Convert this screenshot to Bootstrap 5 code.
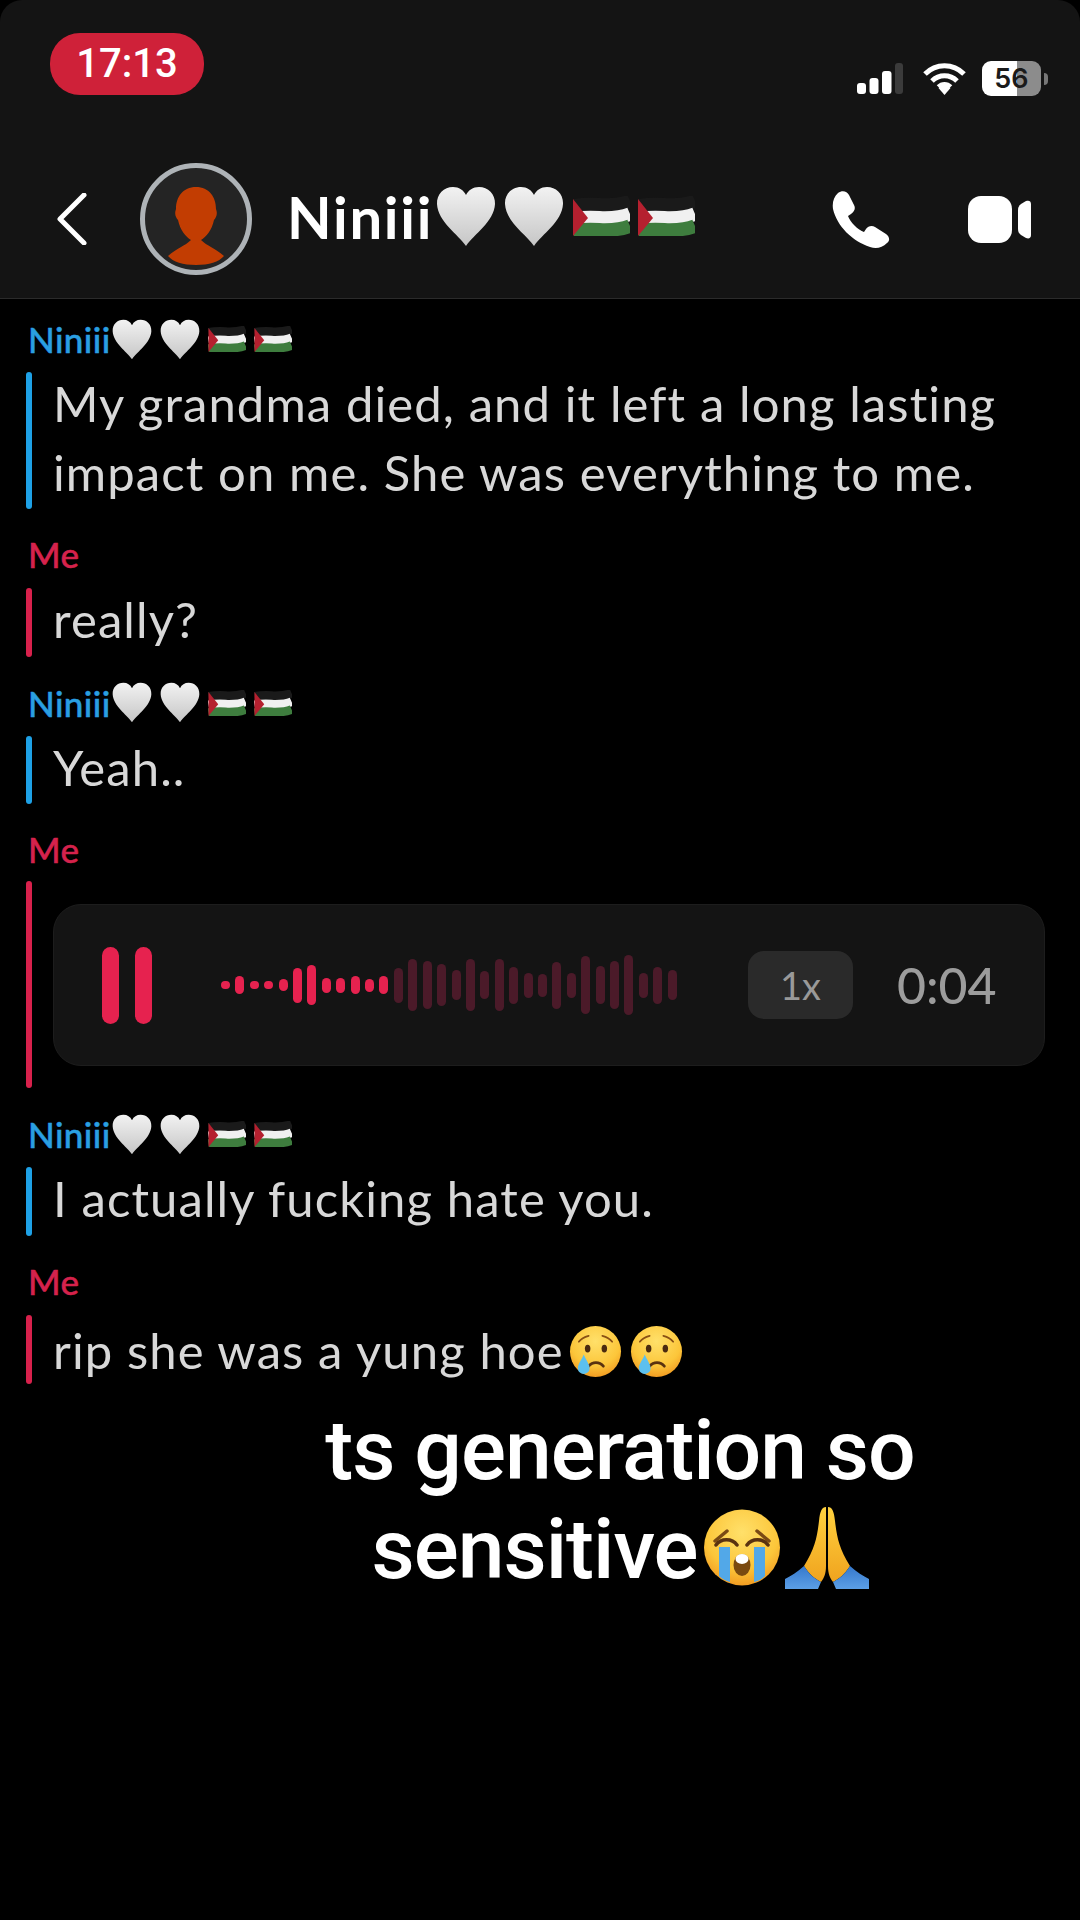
<!DOCTYPE html>
<html lang="en">
<head>
  <meta charset="UTF-8">
  <meta name="viewport" content="width=device-width, initial-scale=1.0">
  <title>Chat</title>
  <link href="https://cdn.jsdelivr.net/npm/bootstrap@5.3.0/dist/css/bootstrap.min.css" rel="stylesheet">
  <style>
    body { background: #000; font-family: "Lato", "Liberation Sans", sans-serif; width: 1080px; min-height: 1920px; }
    .svg-defs { display: block; width: 0; height: 0; overflow: hidden; }

    /* header */
    .chat-head { background: #141414; height: 299px; border-bottom: 1px solid #2b2b2b; border-radius: 22px 22px 0 0; }
    .status-row { padding: 33px 32px 0 50px; height: 95px; }
    .time-pill { width: 154px; height: 62px; border-radius: 30px; background: #cf2139; color: #fff; font-size: 40px; font-family: "Roboto", sans-serif; font-weight: 500; }
    .status-icons { margin-top: 28px; }
    .battery-shell { width: 59px; height: 35px; border-radius: 9px; background: linear-gradient(90deg, #fff 59%, #8c8c8c 59%); color: #1a1a1a; font: 600 27px/35px "Inter", sans-serif; margin-left: 15px; }
    .battery-nub { width: 4px; height: 12px; background: #777; border-radius: 0 4px 4px 0; margin-left: 3px; }
    .nav-row { padding: 68px 49px 0 57px; }
    .avatar-ring { width: 112px; height: 112px; border-radius: 50%; border: 5px solid #aeb3b7; background: #242424; margin: 0 35px 0 53px; overflow: hidden; }
    .head-name { color: #fff; font-size: 58px; font-weight: 700; line-height: 1; margin-top: -4px; letter-spacing: 1.7px; }
    .head-emoji { margin: -6px 0 0 3px; }
    .head-emoji .flag-icon { width: 57px; height: 40px; }
    .head-emoji .heart-icon { width: 60px; height: 61px; }
    .head-emoji .gap-flag { margin-left: 1px; }

    /* messages */
    .chat-list { padding: 20px 35px 0 26px; }
    .msg-item { margin-bottom: 26px; }
    .msg-sender { height: 40px; font-size: 35px; font-weight: 500; line-height: 38px; margin: 0 0 13px 2px; letter-spacing: .4px; -webkit-text-stroke: .5px currentColor; }
    .sender-voice { margin-bottom: 11px; }
    .sender-them { color: #2a9fe2; }
    .sender-me { color: #d5224c; }
    .sender-emoji { margin-left: 1px; }
    .sender-emoji .heart-icon { width: 40px; height: 41px; }
    .sender-emoji .flag-icon { width: 38px; height: 26px; }
    .msg-bar { width: 6px; flex: none; border-radius: 3px; margin-right: 21px; }
    .bar-them { background: #1ea1e6; }
    .bar-me { background: #d8214c; }
    .msg-text { color: #d8d8d8; font-size: 49px; line-height: 68.5px; letter-spacing: 1.1px; margin-top: -3px; padding-bottom: 3px; white-space: nowrap; }
    .msg-text-low { margin-top: 1px; padding-bottom: 0; }
    .cry-icon { width: 53px; height: 53px; vertical-align: -9px; margin-left: 5px; }

    /* voice note */
    .voice-card { height: 162px; margin: 23px 0 22px; background: #141414; border: 1px solid #1d1d1d; border-radius: 28px; padding: 0 47px 0 48px; flex: 1; }
    .pause-mark { width: 17px; height: 77px; border-radius: 9px; background: #e6224f; }
    .wave-box { width: 456px; margin-left: 69px; gap: 5.42px; }
    .wave-bar { width: 9px; border-radius: 5px; flex: none; }
    .wave-on { background: #e6224f; }
    .wave-off { background: #4b1a29; }
    .speed-chip { width: 105px; height: 68px; border-radius: 16px; background: #2a2a2a; color: #999; font-size: 38px; margin-left: 71px; }
    .voice-time { color: #9c9c9c; font-size: 50px; font-weight: 500; margin-left: 44px; line-height: 1; }

    /* caption */
    .caption-box { width: 700px; margin: 17px 0 0 270px; color: #fff; text-align: center; font-family: "Roboto", sans-serif; font-weight: 500; font-size: 84px; line-height: 99px; letter-spacing: -1px; }
    .caption-emoji-a { width: 78px; height: 77px; vertical-align: -8px; margin-left: 6px; }
    .caption-emoji-b { width: 84px; height: 84px; vertical-align: -12px; margin-left: 3px; }
  </style>
</head>
<body>
  <!-- shared emoji shapes -->
  <svg class="svg-defs" aria-hidden="true">
    <defs>
      <linearGradient id="heartFill" x1="0" y1="0" x2="0" y2="1"><stop offset="0" stop-color="#f2f2f2"/><stop offset="1" stop-color="#c6c6c6"/></linearGradient>
      <radialGradient id="faceFill" cx=".5" cy=".3" r=".8"><stop offset="0" stop-color="#ffe06a"/><stop offset=".6" stop-color="#fcc63a"/><stop offset="1" stop-color="#ee8a18"/></radialGradient>
      <linearGradient id="handFill" x1="0" y1="0" x2="0" y2="1"><stop offset="0" stop-color="#ffd23f"/><stop offset="1" stop-color="#f0a31e"/></linearGradient>
      <linearGradient id="sleeveFill" x1="0" y1="0" x2="0" y2="1"><stop offset="0" stop-color="#3578cc"/><stop offset="1" stop-color="#5c9fe6"/></linearGradient>
      <symbol id="heart" viewBox="0 0 60 61">
        <path fill="url(#heartFill)" d="M30 60C22 48 2 36 1 18 .5 8 8 1 17 1c6 0 10.500 3 13 8 2.500-5 7-8 13-8 9 0 16.500 7 16 17-1 18-21 30-29 42Z"/>
      </symbol>
      <symbol id="flag" viewBox="0 0 57 40">
        <g fill="none" stroke-width="13.500">
          <path stroke="#1a1a1a" d="M0 10C15 7 25 9 32 9s18-1 25-4"/>
          <path stroke="#f0f0f0" d="M0 23C15 20 25 22 32 22s18-1 25-4"/>
          <path stroke="#3e7d3e" d="M0 35C15 32 25 34 32 34s18-1 25-4"/>
        </g>
        <path fill="#b5202f" d="M0 3l15 19L0 40Z"/>
      </symbol>
      <symbol id="sad-tear" viewBox="0 0 54 54">
        <circle cx="27" cy="27" r="26" fill="url(#faceFill)"/>
        <ellipse cx="19" cy="24" rx="2.800" ry="4" fill="#4a2a10"/><ellipse cx="36" cy="24" rx="2.800" ry="4" fill="#4a2a10"/>
        <path d="M10 17c3-4 6-5 10-6M44 17c-3-4-6-5-10-6" fill="none" stroke="#8a5014" stroke-width="1.800" stroke-linecap="round"/>
        <path d="M20 42c4-5 11-5 15 0" fill="none" stroke="#5a3210" stroke-width="2.800" stroke-linecap="round"/>
        <path d="M15 30c3 7 6 10 6 14a6 6 0 0 1-12 0c0-4 3-7 6-14Z" fill="#5cc0ee"/>
      </symbol>
      <symbol id="loud-cry" viewBox="0 0 78 77">
        <ellipse cx="38" cy="38.500" rx="38" ry="38" fill="url(#faceFill)"/>
        <path d="M11 32 23 22M65 32 53 22" fill="none" stroke="#7a4a14" stroke-width="3.500" stroke-linecap="round"/>
        <path d="M15 38h11v35c-4-1-8-3-11-6ZM50 38h11v29c-3 3-7 5-11 6Z" fill="#52a8e8"/>
        <path d="M12 36c5-7 16-7 21 0M43 36c5-7 16-7 21 0" fill="none" stroke="#5a3210" stroke-width="3.500" stroke-linecap="round"/>
        <ellipse cx="38" cy="56" rx="8.500" ry="11" fill="#7a4a10"/>
        <ellipse cx="38" cy="50" rx="6.500" ry="5" fill="#fff"/>
      </symbol>
      <symbol id="pray" viewBox="0 0 84 84">
        <path fill="url(#handFill)" d="M41 1c-4 0-6 4-7 14-2 17-4 27-15 45 5 8 11 13 17 16 3-4 5-8 5-16Z"/>
        <path fill="url(#handFill)" d="M43 1c4 0 6 4 7 14 2 17 4 27 15 45-5 8-11 13-17 16-3-4-5-8-5-16Z"/>
        <path fill="url(#sleeveFill)" d="M0 83V73c6-3 12-7 19-13 5 8 11 13 17 16l-3 7Z"/>
        <path fill="url(#sleeveFill)" d="M84 83V73c-6-3-12-7-19-13-5 8-11 13-17 16l3 7Z"/>
      </symbol>
    </defs>
  </svg>

  <!-- Top bar -->
  <header class="chat-head">
    <div class="status-row d-flex justify-content-between align-items-start">
      <div class="time-pill d-flex align-items-center justify-content-center">17:13</div>
      <div class="status-icons d-flex align-items-center">
        <svg width="49" height="31" viewBox="0 0 49 31" class="me-3">
          <rect x="0" y="20" width="9" height="11" rx="3" fill="#fff"/>
          <rect x="12.500" y="15" width="9" height="16" rx="3" fill="#fff"/>
          <rect x="25" y="8" width="9.500" height="23" rx="3" fill="#fff"/>
          <rect x="38" y="0" width="8" height="31" rx="3" fill="#3b3b3b"/>
        </svg>
        <svg width="45" height="33" viewBox="0 0 45 33">
          <path d="M3 12C14 1 31 1 42 12M10 19c7-7 18-7 25 0M16.500 25c3.500-3.500 8.500-3.500 12 0" fill="none" stroke="#fff" stroke-width="5"/>
          <path d="M22.500 33l-6-7c3-3 9-3 12 0Z" fill="#fff"/>
        </svg>
        <div class="battery-shell text-center">56</div>
        <div class="battery-nub"></div>
      </div>
    </div>
    <div class="nav-row d-flex align-items-center">
      <svg width="30" height="52" viewBox="0 0 30 52"><path d="M27 2 3 26l24 24" fill="none" stroke="#fff" stroke-width="5" stroke-linecap="round" stroke-linejoin="round"/></svg>
      <div class="avatar-ring flex-shrink-0">
        <svg width="102" height="102" viewBox="0 0 102 102">
          <path fill="#c23d02" d="M51 19C38 19 31 29 31 41c-2 5 0 9 2 11 2 10 8 17 13 20-6 6-14 8-23 16 5 6 15 9 28 9s23-3 28-9c-9-8-17-10-23-16 5-3 11-10 13-20 2-2 4-6 2-11 0-12-7-22-20-22Z"/>
        </svg>
      </div>
      <span class="head-name">Niniii</span>
      <div class="head-emoji d-flex align-items-center gap-2">
        <svg class="heart-icon"><use href="#heart"/></svg>
        <svg class="heart-icon"><use href="#heart"/></svg>
        <svg class="flag-icon gap-flag"><use href="#flag"/></svg>
        <svg class="flag-icon"><use href="#flag"/></svg>
      </div>
      <svg class="ms-auto" width="58" height="57" viewBox="0 0 58 57"><path fill="#fff" d="M6 2c4-3 9-2 11 2l5 10c2 4 0 7-3 9l-3 2c2 6 10 14 16 16l2-3c2-3 6-4 9-2l11 7c4 3 4 7 1 9-5 5-11 6-17 4C20 50 5 35 1 18 0 11 2 6 6 2Z"/></svg>
      <svg width="63" height="47" viewBox="0 0 63 47" style="margin-left:78px"><rect width="44" height="47" rx="13" fill="#fff"/><path fill="#fff" d="M50 14c0-3 1-4 3-6l5-3c3-1 5 0 5 3v31c0 3-2 4-5 3l-5-3c-2-2-3-3-3-6Z"/></svg>
    </div>
  </header>

  <!-- Messages -->
  <main class="chat-list">
    <section class="msg-item">
      <div class="msg-sender sender-them d-flex align-items-center">Niniii<span class="sender-emoji d-flex align-items-center gap-2">
        <svg class="heart-icon"><use href="#heart"/></svg><svg class="heart-icon"><use href="#heart"/></svg><svg class="flag-icon"><use href="#flag"/></svg><svg class="flag-icon"><use href="#flag"/></svg></span></div>
      <div class="d-flex"><span class="msg-bar bar-them"></span><div class="msg-text">My grandma died, and it left a long lasting<br>impact on me. She was everything to me.</div></div>
    </section>

    <section class="msg-item">
      <div class="msg-sender sender-me">Me</div>
      <div class="d-flex"><span class="msg-bar bar-me"></span><div class="msg-text">really?</div></div>
    </section>

    <section class="msg-item">
      <div class="msg-sender sender-them d-flex align-items-center">Niniii<span class="sender-emoji d-flex align-items-center gap-2">
        <svg class="heart-icon"><use href="#heart"/></svg><svg class="heart-icon"><use href="#heart"/></svg><svg class="flag-icon"><use href="#flag"/></svg><svg class="flag-icon"><use href="#flag"/></svg></span></div>
      <div class="d-flex"><span class="msg-bar bar-them"></span><div class="msg-text">Yeah..</div></div>
    </section>

    <section class="msg-item">
      <div class="msg-sender sender-me sender-voice">Me</div>
      <div class="d-flex"><span class="msg-bar bar-me"></span>
        <div class="voice-card d-flex align-items-center">
          <span class="pause-mark"></span><span class="pause-mark ms-3"></span>
          <div class="wave-box d-flex align-items-center" id="wave"></div>
          <div class="speed-chip d-flex align-items-center justify-content-center">1x</div>
          <div class="voice-time">0:04</div>
        </div>
      </div>
    </section>

    <section class="msg-item">
      <div class="msg-sender sender-them d-flex align-items-center">Niniii<span class="sender-emoji d-flex align-items-center gap-2">
        <svg class="heart-icon"><use href="#heart"/></svg><svg class="heart-icon"><use href="#heart"/></svg><svg class="flag-icon"><use href="#flag"/></svg><svg class="flag-icon"><use href="#flag"/></svg></span></div>
      <div class="d-flex"><span class="msg-bar bar-them"></span><div class="msg-text">I actually fucking hate you.</div></div>
    </section>

    <section class="msg-item mb-0">
      <div class="msg-sender sender-me">Me</div>
      <div class="d-flex"><span class="msg-bar bar-me"></span><div class="msg-text msg-text-low">rip she was a yung hoe<svg class="cry-icon"><use href="#sad-tear"/></svg><svg class="cry-icon ms-2"><use href="#sad-tear"/></svg></div></div>
    </section>
  </main>

  <div class="caption-box">ts generation so<br>sensitive<svg class="caption-emoji-a"><use href="#loud-cry"/></svg><svg class="caption-emoji-b"><use href="#pray"/></svg></div>

  <script src="https://cdn.jsdelivr.net/npm/bootstrap@5.3.0/dist/js/bootstrap.bundle.min.js"></script>
  <script>
    // waveform heights in px, first 12 are the played part
    const heights = [8,18,8,8,12,35,40,15,15,18,13,18,35,52,48,42,30,52,28,52,37,25,23,47,25,58,38,48,60,25,37,30];
    const wave = document.getElementById('wave');
    heights.forEach((h, i) => {
      const bar = document.createElement('span');
      bar.className = 'wave-bar ' + (i < 12 ? 'wave-on' : 'wave-off');
      bar.style.height = h + 'px';
      wave.appendChild(bar);
    });
  </script>
</body>
</html>
